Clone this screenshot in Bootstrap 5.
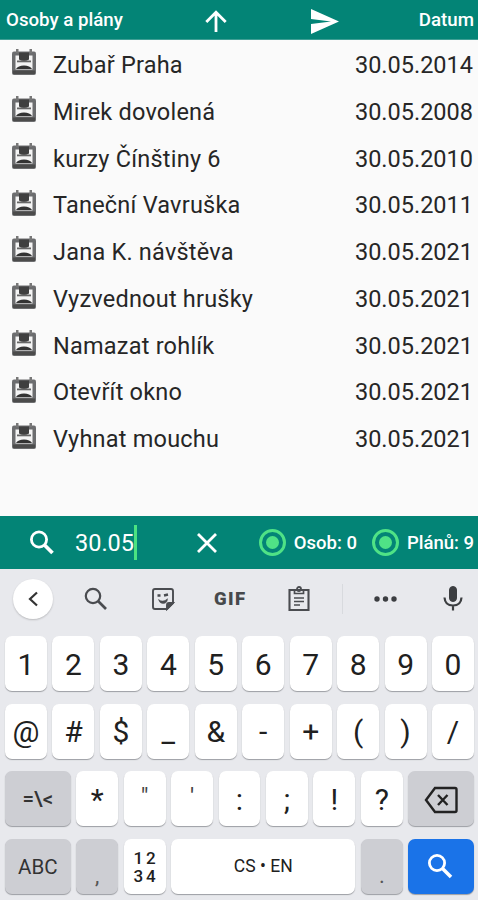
<!DOCTYPE html>
<html lang="cs">
<head>
<meta charset="utf-8">
<meta name="viewport" content="width=device-width, initial-scale=1">
<title>Osoby a plány</title>
<link href="https://cdn.jsdelivr.net/npm/bootstrap@5.3.0/dist/css/bootstrap.min.css" rel="stylesheet">
<style>
body{font-family:Roboto,"Noto Sans",sans-serif;background:#fafafa;color:#1c1c1c;height:900px;overflow:hidden;line-height:1}
svg{display:block;flex:none}
.bar{background:#038476;color:#fff}
.top-bar{height:40px;padding:2px 4px 0 6px;font-size:18.7px;font-weight:500;border-bottom:1px solid #3f9f95}
.top-bar .arrow{margin-left:80px}
.top-bar .send{margin-left:81px}
.plans{height:476px;padding-top:2px}
.plan{height:46.75px;padding:1px 5px 0 12px;font-size:23.5px;color:#262626}
.plan span:first-of-type{letter-spacing:.22px}
.plan svg{margin:-6px 17px 0 0}
.search-bar{height:53px;padding:0 4px 0 24px}
.query{font-size:23.5px;margin-left:15px;line-height:33px;padding-top:2px;border-right:3px solid #4be381}
.count{font-size:18.5px;font-weight:500;padding-top:2px}
.dot{width:27px;height:27px;border:3px solid #4fe286;border-radius:50%;padding:4px}
.dot i{display:block;width:13px;height:13px;border-radius:50%;background:#4fe286;margin:0}
.keyboard{height:331px;background:#e8e9ed}
.tools{height:60px;padding:0 14px 0 13px}
.back{width:40px;height:40px;background:#fff;box-shadow:0 1px 2px #0003}
.gif{font-size:18.5px;font-weight:900;letter-spacing:1.4px;color:#47494c}
.rule{width:1px;height:30px;background:#d8dade}
.keys{padding:7px 0 5px 5px;display:grid;grid-template-columns:repeat(20,1fr);column-gap:0;row-gap:12.5px;grid-auto-rows:55px;margin-right:-1.5px}
.key{grid-column:span 2;margin-right:5.5px;background:#fff;border-radius:7px;box-shadow:0 1px 1px #9c9ea3;font-size:30px;display:flex;align-items:center;justify-content:center;padding-top:2px;color:#202020;min-width:0}
.wide{grid-column:span 3}
.space{grid-column:span 8;font-size:17.5px}
.gray{background:#cdced3}
.blue{background:#1a73e8}
.label{font-size:20.5px;color:#333}
.quote-key{font-size:24px;color:#444;padding-bottom:5px}
.nums{flex-direction:column;font-size:17px;line-height:17px;letter-spacing:3px;padding-left:3px;font-weight:500;gap:1px}
.low{align-items:flex-end;padding-bottom:7px;font-size:22px;color:#555}
</style>
</head>
<body>
<header class="bar top-bar d-flex align-items-center">
<span>Osoby a plány</span>
<svg class="arrow" width="26" height="26" viewBox="0 0 26 26" fill="none" stroke="#fff" stroke-width="2.8"><path d="M13 24V4M3.300 14 13 4.200 22.700 14"/></svg>
<svg class="send" width="30" height="26" viewBox="0 0 30 26" fill="#fff"><path d="M1 1 29 13.500 1 26V16L21 13.500 1 11z"/></svg>
<span class="ms-auto">Datum</span>
</header>
<main class="plans" id="plans"></main>
<section class="bar search-bar d-flex align-items-center">
<svg width="36" height="36" viewBox="0 0 36 36" fill="none" stroke="#fff"><circle cx="15" cy="14.500" r="7.600" stroke-width="2.800"/><path d="m20.500 20 8 8" stroke-width="3.700"/></svg>
<span class="query">30.05</span>
<svg style="margin-left:59px" width="22" height="22" viewBox="0 0 22 22" stroke="#fff" stroke-width="2.800"><path d="m2 2 18 18M20 2 2 20"/></svg>
<span class="dot ms-auto"><i></i></span><span class="count ms-2">Osob: 0</span>
<span class="dot" style="margin-left:15px"><i></i></span><span class="count ms-2">Plánů: 9</span>
</section>
<section class="keyboard">
<div class="tools d-flex align-items-center">
<span class="back rounded-circle d-flex align-items-center justify-content-center"><svg width="14" height="18" viewBox="0 0 14 18" fill="none" stroke="#333" stroke-width="2.200"><path d="m11 2.500-7 6.500 7 6.500"/></svg></span>
<svg style="margin-left:30px" width="26" height="26" viewBox="0 0 26 26" fill="none" stroke="#4a4c50"><circle cx="10" cy="10" r="7.200" stroke-width="2.200"/><path d="m15 15 8 8" stroke-width="2.700"/></svg>
<svg style="margin-left:42px" width="24" height="24" viewBox="0 0 24 24" fill="none" stroke="#4a4c50" stroke-width="1.900"><path d="M4 2h16q2 0 2 2v12l-6 6H4q-2 0-2-2V4q0-2 2-2z"/><path d="M22 16h-4q-2 0-2 2v4z" fill="#4a4c50"/><path d="M7.500 12.500q4.500 3.600 9-.8-.2 4.800-4.500 4.800-3.500 0-4.500-4z" fill="#4a4c50" stroke-width=".5"/><path d="M6.500 8.500h3M13 8.500l4-1" stroke-width="2.400"/></svg>
<span class="gif" style="margin-left:39px">GIF</span>
<svg style="margin-left:40px" width="24" height="28" viewBox="0 0 24 28" fill="none" stroke="#4a4c50"><path d="M2.500 5h19v20h-19z" stroke-width="2.100"/><path d="M7.500 6v2.500h9V6M7 13h10M7 16.500h10M7 20h6" stroke-width="1.700"/><circle cx="12" cy="4" r="2" stroke-width="1.800"/></svg>
<span class="rule" style="margin-left:31px"></span>
<svg style="margin-left:30px" width="26" height="8" viewBox="0 0 26 8" fill="#3c3e41"><circle cx="4" cy="4" r="2.700"/><circle cx="12.500" cy="4" r="2.700"/><circle cx="21" cy="4" r="2.700"/></svg>
<svg class="ms-auto" width="22" height="28" viewBox="0 0 22 28" fill="none" stroke="#3c3e41"><rect x="7.500" y="1.500" width="7" height="15" rx="3.500" fill="#3c3e41"/><path d="M2.500 12.500q.5 8 8.500 8t8.500-8M11 20.500v5" stroke-width="2.200"/></svg>
</div>
<div class="keys">
<span class="key">1</span><span class="key">2</span><span class="key">3</span><span class="key">4</span><span class="key">5</span><span class="key">6</span><span class="key">7</span><span class="key">8</span><span class="key">9</span><span class="key">0</span>
<span class="key">@</span><span class="key">#</span><span class="key">$</span><span class="key">_</span><span class="key">&amp;</span><span class="key">-</span><span class="key">+</span><span class="key">(</span><span class="key">)</span><span class="key">/</span>
<span class="key gray wide label fw-medium">=\&lt;</span><span class="key">*</span><span class="key quote-key">"</span><span class="key quote-key">'</span><span class="key">:</span><span class="key">;</span><span class="key">!</span><span class="key">?</span>
<span class="key gray wide"><svg width="34" height="28" viewBox="0 0 34 28" fill="none" stroke="#222" stroke-width="2.400"><path d="M11 2h20q1.500 0 1.500 1.500v21q0 1.500-1.500 1.500H11L2 14z"/><path d="m14 9 9.500 10M23.500 9 14 19"/></svg></span>
<span class="key gray wide label">ABC</span><span class="key gray low">,</span><span class="key nums"><span>12</span><span>34</span></span><span class="key space">CS • EN</span><span class="key gray low">.</span>
<span class="key blue wide"><svg width="26" height="26" viewBox="0 0 26 26" fill="none" stroke="#fff"><circle cx="9" cy="9" r="7.600" stroke-width="2.800"/><path d="m14.500 14.500 8.500 8.500" stroke-width="3.600"/></svg></span>
</div>
</section>
<script>
const plans=[["Zubař Praha","30.05.2014"],["Mirek dovolená","30.05.2008"],["kurzy Čínštiny 6","30.05.2010"],["Taneční Vavruška","30.05.2011"],["Jana K. návštěva","30.05.2021"],["Vyzvednout hrušky","30.05.2021"],["Namazat rohlík","30.05.2021"],["Otevřít okno","30.05.2021"],["Vyhnat mouchu","30.05.2021"]];
const icon='<svg width="24" height="27" viewBox="0 0 24 27"><path d="M2 2.500h20q2 0 2 2V24q0 2-2 2H2q-2 0-2-2V4.500q0-2 2-2z" fill="#6c6d6f"/><path d="M3.500 6.500h17v14h-17z" fill="#f4f4f4"/><path d="M4 0h2.500v4H4zM17.500 0H20v4h-2.500z" fill="#777"/><path d="M7 3.500h10v7q-5 3-10 0z" fill="#3f3f3f"/><path d="M5 11.500h14v1.800H5z" fill="#666"/><path d="M4 20q2-3.500 8-3.500t8 3.500z" fill="#333"/><path d="M1 21.500h22V25H1z" fill="#4b4b4b"/></svg>';
document.getElementById("plans").innerHTML=plans.map(([n,d])=>`<div class="plan d-flex align-items-center">${icon}<span>${n}</span><span class="ms-auto">${d}</span></div>`).join("");
</script>
<script src="https://cdn.jsdelivr.net/npm/bootstrap@5.3.0/dist/js/bootstrap.bundle.min.js"></script>
</body>
</html>
